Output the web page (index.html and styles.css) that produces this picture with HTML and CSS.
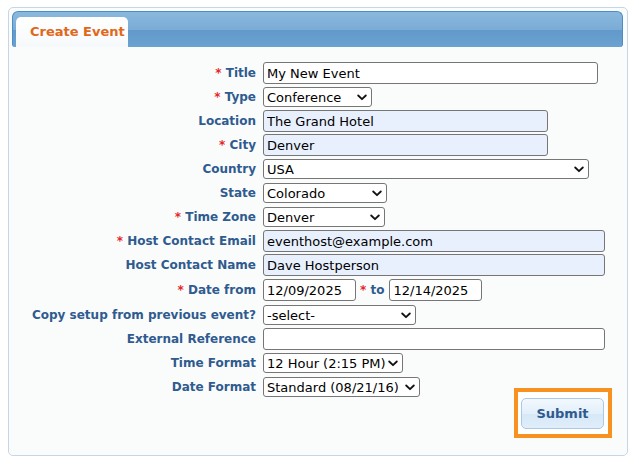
FILE: index.html
```html
<!DOCTYPE html>
<html>
<head>
<meta charset="utf-8">
<link rel="stylesheet" href="styles.css">
</head>
<body>
<div class="panel">
  <div class="tabbar">
    <div class="tab">Create Event</div>
  </div>
  <form class="form">
    <label class="lbl"><span class="req">*</span> Title</label>
    <div class="ctl"><input class="inp w-title" type="text" value="My New Event"></div>

    <label class="lbl"><span class="req">*</span> Type</label>
    <div class="ctl"><select class="sel w-type"><option>Conference</option></select></div>

    <label class="lbl">Location</label>
    <div class="ctl"><input class="inp auto w-loc" type="text" value="The Grand Hotel"></div>

    <label class="lbl"><span class="req">*</span> City</label>
    <div class="ctl"><input class="inp auto w-loc" type="text" value="Denver"></div>

    <label class="lbl">Country</label>
    <div class="ctl"><select class="sel w-country"><option>USA</option></select></div>

    <label class="lbl">State</label>
    <div class="ctl"><select class="sel w-state"><option>Colorado</option></select></div>

    <label class="lbl"><span class="req">*</span> Time Zone</label>
    <div class="ctl"><select class="sel w-tz"><option>Denver</option></select></div>

    <label class="lbl"><span class="req">*</span> Host Contact Email</label>
    <div class="ctl"><input class="inp auto w-full" type="text" value="eventhost@example.com"></div>

    <label class="lbl">Host Contact Name</label>
    <div class="ctl"><input class="inp auto w-full" type="text" value="Dave Hostperson"></div>

    <label class="lbl"><span class="req">*</span> Date from</label>
    <div class="ctl dates">
      <input class="inp w-date" type="text" value="12/09/2025">
      <span class="lbl to"><span class="req">*</span> to</span>
      <input class="inp w-date" type="text" value="12/14/2025">
    </div>

    <label class="lbl">Copy setup from previous event?</label>
    <div class="ctl"><select class="sel w-copy"><option>-select-</option></select></div>

    <label class="lbl">External Reference</label>
    <div class="ctl"><input class="inp w-full" type="text" value=""></div>

    <label class="lbl">Time Format</label>
    <div class="ctl"><select class="sel w-time"><option>12 Hour (2:15 PM)</option></select></div>

    <label class="lbl">Date Format</label>
    <div class="ctl"><select class="sel w-datef"><option>Standard (08/21/16)</option></select></div>
  </form>
  <div class="actions">
    <span class="focusring"><button class="btn" type="button">Submit</button></span>
  </div>
</div>
</body>
</html>
```

FILE: styles.css
```css
html, body {
  margin: 0;
  padding: 0;
  background: #ffffff;
}
body {
  font-family: "DejaVu Sans", Verdana, sans-serif;
}
.panel {
  margin: 7px 0 0 8px;
  width: 620px;
  height: 449px;
  border: 1px solid #c4d6e8;
  border-radius: 5px;
  background: #fafcfc;
  padding: 3px 4px 0 3px;
  box-sizing: border-box;
}
.tabbar {
  height: 36px;
  box-sizing: border-box;
  border: 1px solid #4f8bc4;
  border-bottom: none;
  border-radius: 6px 6px 3px 3px;
  background: linear-gradient(to bottom, #8ab8dd 0%, #7bacd6 50%, #6199cb 52%, #6ba2d0 100%);
  display: flex;
  align-items: flex-end;
  padding-left: 3px;
}
.tab {
  width: 112px;
  height: 30px;
  box-sizing: border-box;
  border-radius: 5px 5px 0 0;
  background: linear-gradient(to bottom, #ffffff 0%, #f6f9fb 100%);
  color: #e0681a;
  font-weight: bold;
  font-size: 13px;
  line-height: 30px;
  padding-left: 14px;
  white-space: nowrap;
}
.form {
  display: grid;
  grid-template-columns: 244px 1fr;
  column-gap: 7px;
  row-gap: 2px;
  margin: 15px 0 0 0;
  align-items: center;
}
.lbl {
  color: #2f5b8f;
  font-weight: bold;
  font-size: 12px;
  text-align: right;
  white-space: nowrap;
  line-height: 22px;
}
.req {
  color: #e3262b;
}
.ctl {
  display: flex;
  align-items: center;
  height: 22px;
}
.ctl.dates {
  height: 24px;
}
.inp, .sel {
  font-family: "DejaVu Sans", Verdana, sans-serif;
  font-size: 13px;
  color: #000;
  box-sizing: border-box;
  border: 1px solid #767676;
  border-radius: 3px;
  background-color: #ffffff;
  margin: 0;
}
.inp {
  height: 22px;
  padding: 0 3px;
}
.sel {
  height: 20px;
  padding: 0 14px 0 3px;
  -webkit-appearance: none;
  appearance: none;
  background-image: url("data:image/svg+xml,%3Csvg xmlns='http://www.w3.org/2000/svg' width='10' height='7' viewBox='0 0 10 7'%3E%3Cpath d='M1.2 1.5 L5 5.2 L8.8 1.5' fill='none' stroke='%23111' stroke-width='1.8' stroke-linecap='round' stroke-linejoin='round'/%3E%3C/svg%3E");
  background-repeat: no-repeat;
  background-position: right 4px center;
  background-size: 10px 7px;
}
.auto {
  background-color: #e8f0fe;
}
.w-title { width: 335px; }
.w-type { width: 109px; }
.w-loc { width: 285px; }
.w-country { width: 326px; }
.w-state { width: 124px; }
.w-tz { width: 122px; }
.w-full { width: 342px; }
.w-date { width: 93px; }
.w-copy { width: 153px; }
.w-time { width: 140px; }
.w-datef { width: 157px; }
.dates .to {
  margin: 0 5px 0 4px;
}
.actions {
  display: flex;
  justify-content: flex-end;
  margin-top: -10px;
  padding-right: 11px;
}
.focusring {
  display: inline-flex;
  border: 4px solid #f7911f;
  padding: 6px 4px 5px 3px;
  background: #ffffff;
}
.btn {
  width: 83px;
  height: 31px;
  box-sizing: border-box;
  border: 1px solid #a9c9e6;
  border-radius: 5px;
  background: linear-gradient(to bottom, #f2f8fd 0%, #e3effa 50%, #d6e8f7 52%, #e1eefa 100%);
  color: #2e5b8e;
  font-family: "DejaVu Sans", Verdana, sans-serif;
  font-weight: bold;
  font-size: 13px;
  padding: 0;
}
```
